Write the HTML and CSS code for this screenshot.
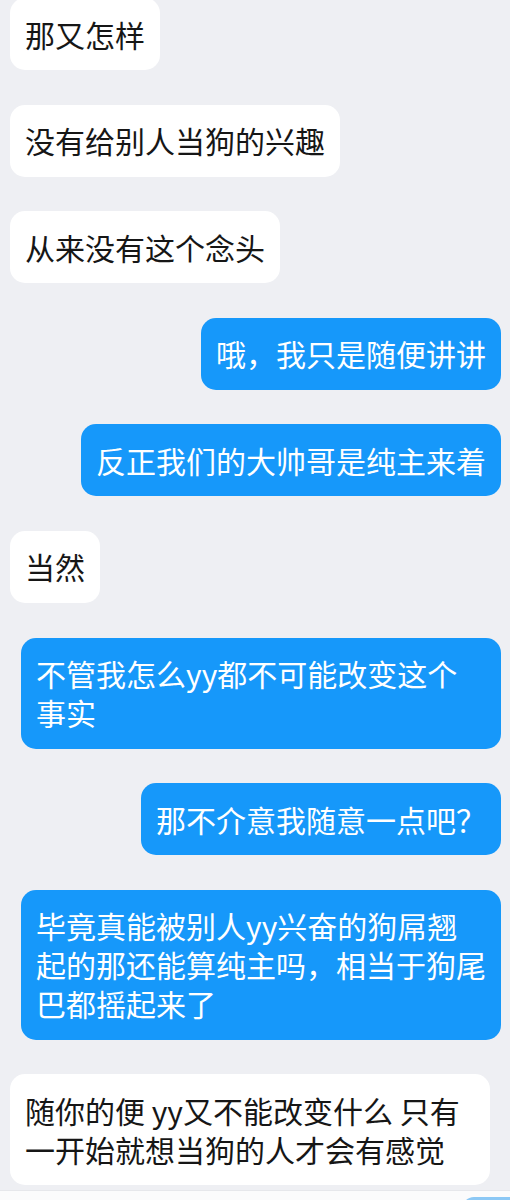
FILE: index.html
```html
<!DOCTYPE html>
<html lang="zh-CN">
<head>
  <meta charset="UTF-8">
  <meta name="viewport" content="width=device-width, initial-scale=1.0">
  <title>聊天记录</title>
  <link rel="stylesheet" href="styles.css">
</head>
<body>
  <div class="chat">
    <div class="msg left"><div class="bubble">那又怎样</div></div>
    <div class="msg left"><div class="bubble">没有给别人当狗的兴趣</div></div>
    <div class="msg left"><div class="bubble">从来没有这个念头</div></div>
    <div class="msg right"><div class="bubble">哦，我只是随便讲讲</div></div>
    <div class="msg right"><div class="bubble">反正我们的大帅哥是纯主来着</div></div>
    <div class="msg left"><div class="bubble">当然</div></div>
    <div class="msg right"><div class="bubble">不管我怎么yy都不可能改变这个事实</div></div>
    <div class="msg right"><div class="bubble">那不介意我随意一点吧？</div></div>
    <div class="msg right"><div class="bubble">毕竟真能被别人yy兴奋的狗屌翘起的那还能算纯主吗，相当于狗尾巴都摇起来了</div></div>
    <div class="msg left"><div class="bubble">随你的便 yy又不能改变什么 只有一开始就想当狗的人才会有感觉</div></div>
  </div>

  <div class="input-bar">
    <div class="send"></div>
  </div>
</body>
</html>
```

FILE: styles.css
```css
body {
  margin: 0;
  padding: 0;
  background-color: #eeeff3;
  font-family: "Noto Sans CJK SC", "Noto Sans", sans-serif;
  overflow: hidden;
}

.chat {
  display: flex;
  flex-direction: column;
  gap: 34.6px;
  padding: 0 9px 0 10px;
  margin-top: -2px;
}

.msg {
  display: flex;
}

.msg.right {
  justify-content: flex-end;
}

.bubble {
  max-width: 480px;
  box-sizing: border-box;
  padding: 16.5px 15px;
  border-radius: 15px;
  font-size: 30px;
  line-height: 39px;
  word-break: break-all;
}

.left .bubble {
  background-color: #ffffff;
  color: #161616;
}

.right .bubble {
  background-color: #1698fa;
  color: #ffffff;
}

.input-bar {
  margin-top: 5px;
  height: 40px;
  background-color: #fbfbfc;
  border-top: 1px solid #e6e7eb;
  display: flex;
  justify-content: flex-end;
  padding-top: 6px;
}

.send {
  width: 48px;
  height: 40px;
  background-color: #8cc8f5;
  border-radius: 12px 0 0 0;
}
```
